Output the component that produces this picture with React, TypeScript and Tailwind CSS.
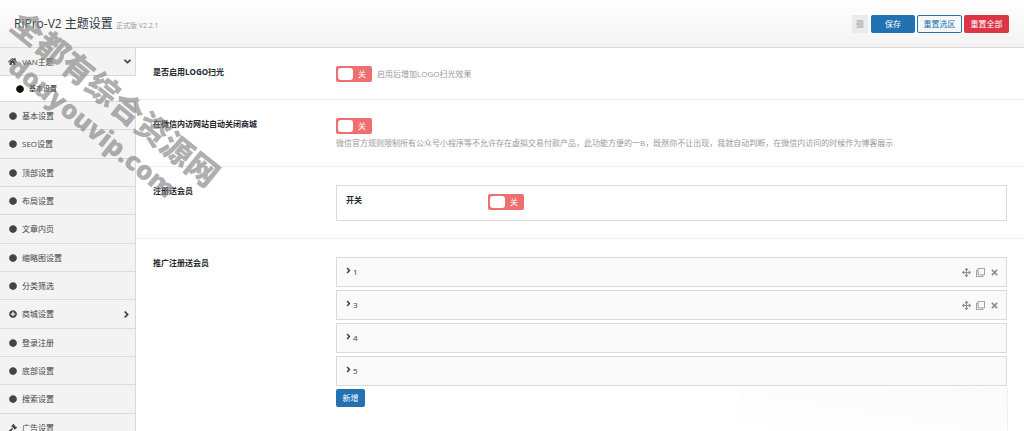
import React from 'react'
import {
  FaAngleDown,
  FaAngleRight,
  FaArrowsAlt,
  FaCircle,
  FaGavel,
  FaHome,
  FaOutdent,
  FaPlusCircle,
  FaRegClone,
  FaTimes,
} from 'react-icons/fa'

const menu = [
  { title: '基本设置', icon: FaCircle },
  { title: 'SEO设置', icon: FaCircle },
  { title: '顶部设置', icon: FaCircle },
  { title: '布局设置', icon: FaCircle },
  { title: '文章内页', icon: FaCircle },
  { title: '缩略图设置', icon: FaCircle },
  { title: '分类筛选', icon: FaCircle },
  { title: '商城设置', icon: FaPlusCircle, hasChildren: true },
  { title: '登录注册', icon: FaCircle },
  { title: '底部设置', icon: FaCircle },
  { title: '搜索设置', icon: FaCircle },
  { title: '广告设置', icon: FaGavel },
]

const groups = [
  { title: '1', actions: true },
  { title: '3', actions: true },
  { title: '4', actions: false },
  { title: '5', actions: false },
]

const Switcher = ({ label }: { label: string }) => (
  <label className="relative flex h-4 w-9 shrink-0 cursor-pointer items-center justify-between rounded-xs bg-[#ed6f6f] pr-[6px] pl-[2px] text-white">
    <input type="checkbox" aria-label={label} className="peer sr-only" />
    <span className="h-3 w-[15px] rounded-[3px] bg-white" />
    <span>关</span>
  </label>
)

const Field = ({
  title,
  children,
}: {
  title: string
  children: React.ReactNode
}) => (
  <div className="flex border-b border-[#eeeeee] px-[17px] pt-[18px] pb-[17px] last:border-b-0">
    <h4 className="w-[183px] shrink-0 font-bold text-[#23282d]">{title}</h4>
    <div className="min-w-0 flex-1 text-[#999999]">{children}</div>
  </div>
)

const Sidebar = () => (
  <nav className="w-[136px] shrink-0 border-r border-[#d9dadc] bg-[#f3f3f3] text-[#444444]">
    <a
      href="#van"
      className="flex h-7 items-center border-b border-[#d9dadc] pr-[2px] pl-2"
    >
      <FaHome className="mr-[5px] size-[9px]" />
      <span className="flex-1">VAN主题</span>
      <FaAngleDown className="size-[11px]" />
    </a>
    <a
      href="#van-basic"
      className="-mr-px flex h-[26px] items-center border-b border-[#d9dadc] bg-white pl-4 text-[7px] text-[#111111]"
    >
      <FaCircle className="mr-[5px] size-2" />
      基本设置
    </a>
    <ul>
      {menu.map(({ title, icon: Icon, hasChildren }) => (
        <li key={title} className="h-7 nth-[3n+2]:h-[29px]">
          <a
            href={`#${title}`}
            className="flex h-full items-center border-b border-[#d9dadc] pr-[3px] pl-[9px]"
          >
            <Icon className="mr-[5px] size-2" />
            <span className="flex-1">{title}</span>
            {hasChildren && <FaAngleRight className="size-[11px]" />}
          </a>
        </li>
      ))}
    </ul>
  </nav>
)

const App = () => {
  return (
    <div className="relative flex h-screen flex-col overflow-hidden bg-white font-['Open_Sans','Noto_Sans_CJK_SC',sans-serif] text-[8px] leading-3">
      <header className="flex h-12 shrink-0 items-center justify-between border-b border-[#d9dadc] bg-linear-to-b from-[#fefefe] to-[#f3f3f3] pr-[15px] pl-[14px]">
        <h1 className="text-xs text-[#32373c]">
          RiPro-V2 主题设置{' '}
          <small className="text-[7px] text-[#999999]">正式版 V2.2.1</small>
        </h1>
        <div className="flex gap-[2px]">
          <button
            aria-label="展开"
            className="mr-px flex h-[18px] w-4 items-center justify-center bg-[#ebebeb] text-[#999999]"
          >
            <FaOutdent />
          </button>
          <button className="h-[18px] w-11 rounded-xs bg-[#2271b1] text-white">
            保存
          </button>
          <button className="h-[18px] w-[45px] rounded-xs border border-[#2271b1] bg-[#f6f7f7] text-[#2271b1]">
            重置选区
          </button>
          <button className="h-[18px] w-[45px] rounded-xs bg-[#dc3545] text-white">
            重置全部
          </button>
        </div>
      </header>

      <div className="flex min-h-0 flex-1">
        <Sidebar />
        <main className="relative min-w-0 flex-1">
          <div>
            <Field title="是否启用LOGO扫光">
              <div className="flex items-center gap-[5px]">
                <Switcher label="是否启用LOGO扫光" />
                <p>启用后增加LOGO扫光效果</p>
              </div>
            </Field>

            <Field title="在微信内访网站自动关闭商城">
              <Switcher label="在微信内访网站自动关闭商城" />
              <p className="mt-[3px]">
                微信官方规则限制所有公众号小程序等不允许存在虚拟交易付款产品，此功能方便的一B，既然你不让出现，我就自动判断，在微信内访问的时候作为博客展示
              </p>
            </Field>

            <Field title="注册送会员">
              <div className="flex border border-[#d9dadc] px-[9px] pt-2 pb-[10px]">
                <h4 className="w-[142px] font-bold text-[#23282d]">开关</h4>
                <Switcher label="开关" />
              </div>
            </Field>

            <Field title="推广注册送会员">
              <ul className="flex flex-col gap-[3px]">
                {groups.map(({ title, actions }) => (
                  <li
                    key={title}
                    className="flex h-[30px] items-center justify-between border border-[#d9dadc] bg-[#fafafa] px-[7px]"
                  >
                    <button className="flex items-center text-[#32373c]">
                      <FaAngleRight className="mb-[3px] size-[9px]" />
                      {title}
                    </button>
                    {actions && (
                      <div className="flex items-center gap-[5px] text-[#8c8f94]">
                        <button aria-label="移动">
                          <FaArrowsAlt className="size-[9px]" />
                        </button>
                        <button aria-label="复制">
                          <FaRegClone className="size-[9px]" />
                        </button>
                        <button aria-label="删除">
                          <FaTimes className="size-[9px]" />
                        </button>
                      </div>
                    )}
                  </li>
                ))}
              </ul>
              <button className="mt-[3px] h-[18px] w-[29px] rounded-xs bg-[#2271b1] text-white">
                新增
              </button>
            </Field>
          </div>
          <div className="absolute right-4 bottom-0 h-11 w-[270px] border-r border-[#f1f1f1] bg-linear-to-tr from-white to-[#fafafa]" />
        </main>
      </div>

      {/* watermark */}
      <div className="pointer-events-none absolute top-[77px] -left-6 w-64 rotate-39 text-center font-['Open_Sans','Noto_Sans_CJK_SC',sans-serif] font-black whitespace-nowrap text-[#808080]/65">
        <p className="text-[32px] leading-9">全都有综合资源网</p>
        <p className="text-[26px] leading-9">douyouvip.com</p>
      </div>
    </div>
  )
}

export default App
